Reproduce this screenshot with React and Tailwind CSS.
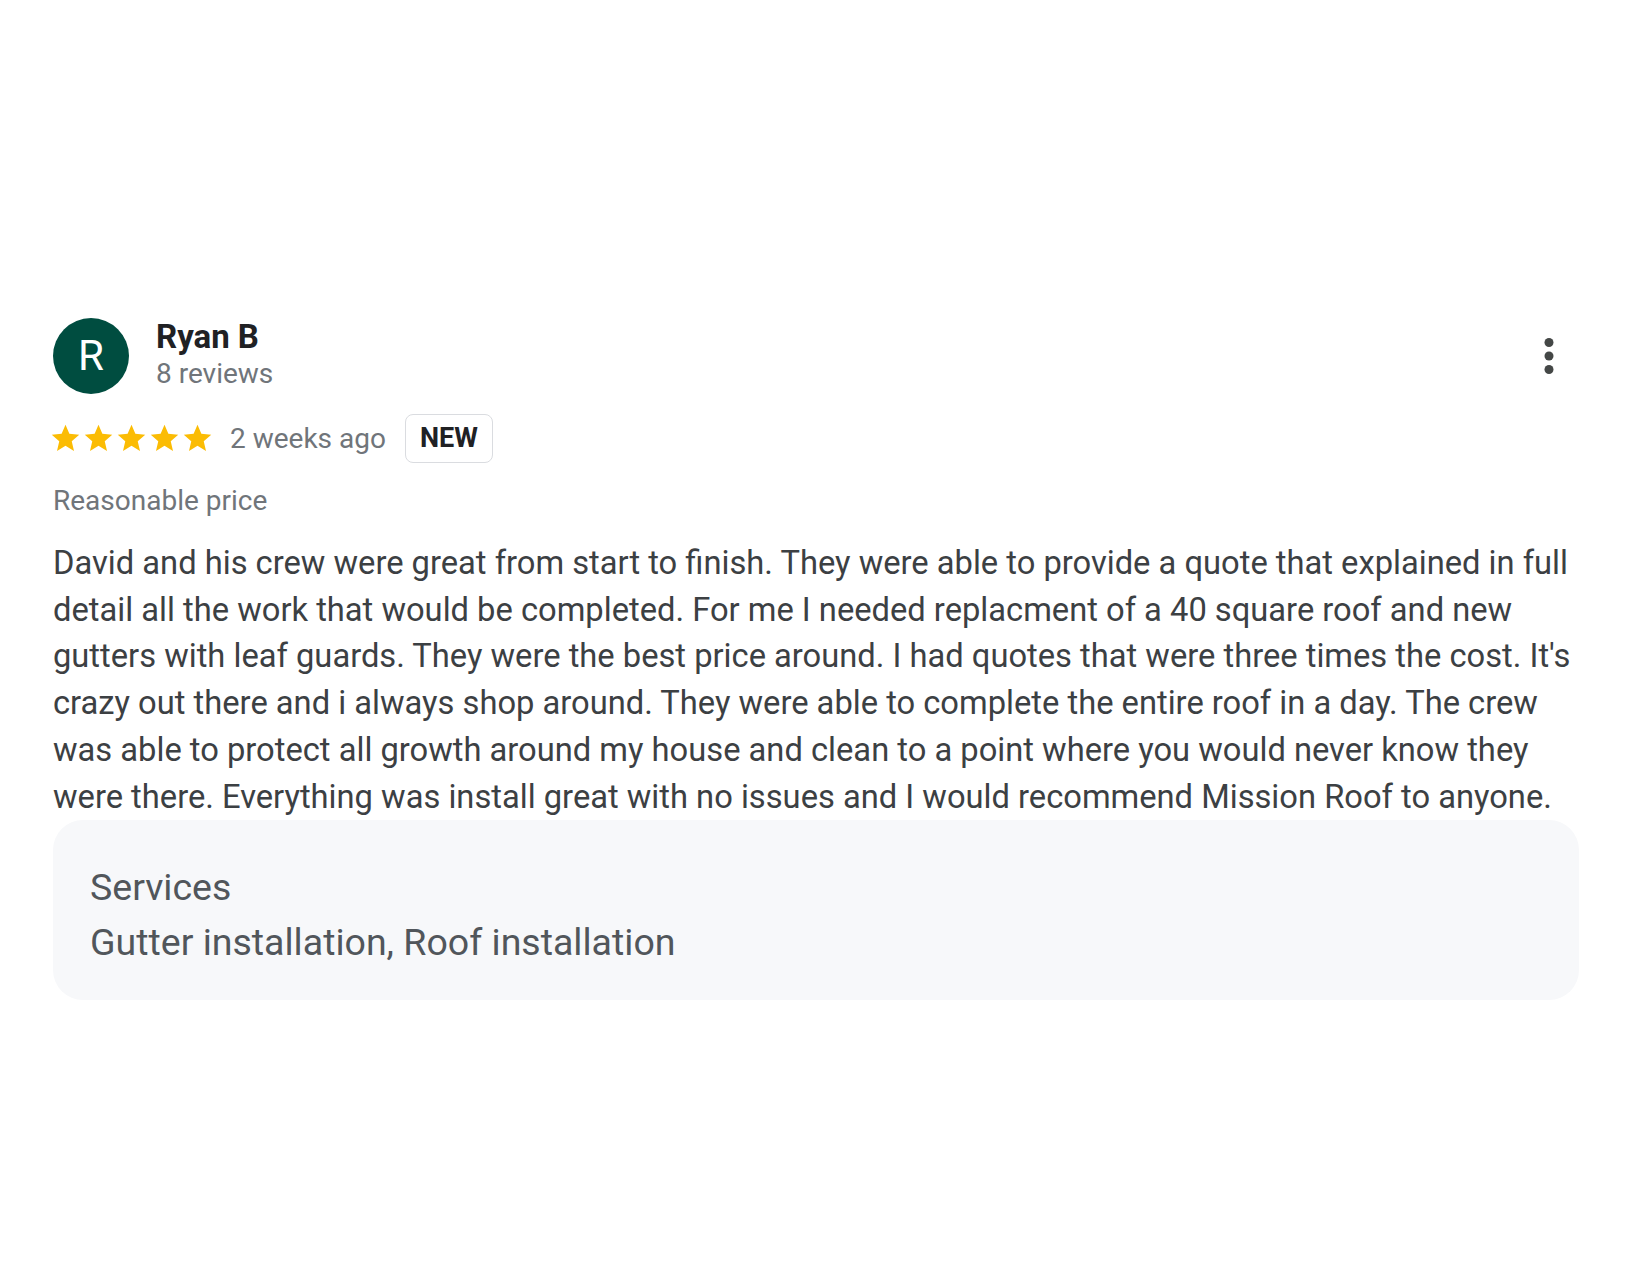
import React from "react";

function Star() {
  return (
    <svg viewBox="0 0 24 24" className="w-[33px] h-[33px] shrink-0" fill="#fbbc04">
      <path d="M12 17.27L18.18 21l-1.64-7.03L22 9.24l-7.19-.61L12 2 9.19 8.63 2 9.24l5.46 4.73L5.82 21z" />
    </svg>
  );
}

export default function App() {
  return (
    <div
      className="min-h-screen bg-white"
      style={{ fontFamily: "Roboto, 'Noto Sans', Arial, sans-serif" }}
    >
      <div className="w-[1579px] pt-[318px] pl-[53px]">
        <div className="flex items-center justify-between">
          <div className="flex items-start">
            <div className="w-[76px] h-[76px] rounded-full bg-[#004d40] flex items-center justify-center text-white text-[42px] leading-none">
              R
            </div>
            <div className="ml-[27px]">
              <div className="text-[33px] leading-[38px] font-bold text-[#202124]">Ryan B</div>
              <div className="text-[28px] leading-[36px] text-[#70757a]">8 reviews</div>
            </div>
          </div>
          <button className="mr-[3px] text-[#444746]">
            <svg viewBox="0 0 24 24" className="w-[54px] h-[54px]" fill="currentColor">
              <circle cx="12" cy="6" r="2" />
              <circle cx="12" cy="12" r="2" />
              <circle cx="12" cy="18" r="2" />
            </svg>
          </button>
        </div>

        <div className="mt-[20px] flex items-center">
          <div className="flex items-center -ml-[4px]">
            <Star />
            <Star />
            <Star />
            <Star />
            <Star />
          </div>
          <span className="ml-[16px] text-[28px] leading-[36px] text-[#70757a]">2 weeks ago</span>
          <span className="ml-[19px] h-[49px] w-[88px] flex items-center justify-center rounded-[8px] border-[1.5px] border-[#dadce0] text-[27px] font-bold text-[#202124]">
            NEW
          </span>
        </div>

        <div className="mt-[20px] text-[28px] leading-[36px] text-[#70757a]">Reasonable price</div>

        <p className="mt-[21px] text-[32.7px] leading-[46.7px] text-[#3c4043]">
          David and his crew were great from start to finish. They were able to provide a quote that explained in full detail all the work that would be completed. For me I needed replacment of a 40 square roof and new gutters with leaf guards. They were the best price around. I had quotes that were three times the cost. It's crazy out there and i always shop around. They were able to complete the entire roof in a day. The crew was able to protect all growth around my house and clean to a point where you would never know they were there. Everything was install great with no issues and I would recommend Mission Roof to anyone.
        </p>

        <div className="mt-0 rounded-[30px] bg-[#f7f8fa] pl-[37px] pt-[40px] pb-[30px]">
          <div className="text-[37.5px] leading-[55px] text-[#51565b]">Services</div>
          <div className="text-[37.5px] leading-[55px] text-[#51565b]">Gutter installation, Roof installation</div>
        </div>
      </div>
    </div>
  );
}
